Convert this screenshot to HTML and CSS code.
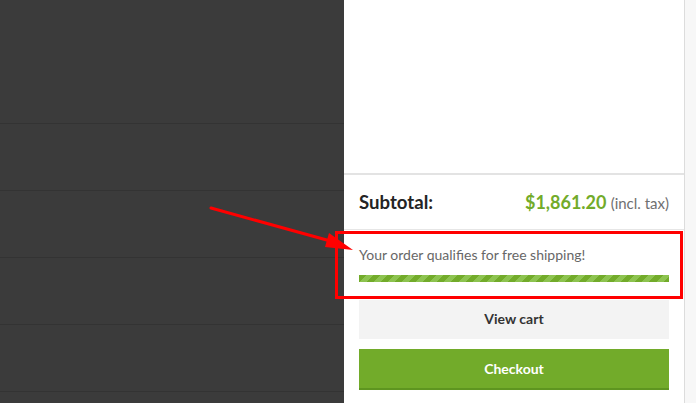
FILE: index.html
```html
<!DOCTYPE html>
<html>
<head>
<meta charset="utf-8">
<link rel="stylesheet" href="styles.css">
</head>
<body>
<div class="page">
  <div class="backdrop">
    <div class="row row-first"></div>
    <div class="row"></div>
    <div class="row"></div>
    <div class="row"></div>
    <div class="row"></div>
    <div class="row row-last"></div>
  </div>
  <aside class="cart">
    <div class="cart-items"></div>
    <div class="subtotal">
      <span class="subtotal-label">Subtotal:</span>
      <span class="subtotal-value"><span class="price">$1,861.20</span> <small class="tax">(incl. tax)</small></span>
    </div>
    <div class="shipping">
      <p class="shipping-text">Your order qualifies for free shipping!</p>
      <div class="progress"></div>
    </div>
    <div class="actions">
      <a class="btn btn-view">View cart</a>
      <a class="btn btn-checkout">Checkout</a>
    </div>
  </aside>
  <div class="scrollbar"></div>
  <div class="annot-box"></div>
  <svg class="annot-arrow" width="696" height="403" viewBox="0 0 696 403">
    <line x1="211" y1="208" x2="334" y2="242" stroke="#ff0000" stroke-width="3" stroke-linecap="round"/>
    <polygon points="353,250 329,233 325,247" fill="#ff0000"/>
  </svg>
</div>
</body>
</html>
```
FILE: styles.css
```css
* { box-sizing: border-box; }
html, body { margin: 0; padding: 0; }
body {
  font-family: Lato, "Open Sans", sans-serif;
  width: 696px;
  height: 403px;
  overflow: hidden;
}
.page {
  position: relative;
  display: flex;
  width: 696px;
  height: 403px;
  overflow: hidden;
}
.backdrop {
  flex: 0 0 344px;
  background: #3b3b3b;
  display: flex;
  flex-direction: column;
  overflow: hidden;
}
.row {
  height: 67px;
  border-bottom: 1px solid #333333;
  flex: 0 0 auto;
}
.row-first { height: 124px; }
.row-last { border-bottom: none; }
.cart {
  flex: 0 0 340px;
  background: #ffffff;
  display: flex;
  flex-direction: column;
  overflow: hidden;
}
.cart-items {
  height: 175px;
  border-bottom: 2px solid #e3e3e3;
  flex: 0 0 auto;
}
.subtotal {
  height: 55px;
  flex: 0 0 auto;
  border-bottom: 1px solid #e6e6e6;
  display: flex;
  align-items: center;
  justify-content: space-between;
  padding: 0 15px;
}
.subtotal-label {
  font-weight: 700;
  font-size: 18.6px;
  color: #242424;
}
.price {
  font-weight: 700;
  font-size: 18px;
  color: #72ab2a;
}
.tax {
  font-size: 15px;
  color: #707070;
}
.shipping {
  padding: 15px 15px 0;
}
.shipping-text {
  margin: 0;
  font-size: 14px;
  line-height: 20px;
  color: #676767;
}
.progress {
  margin-top: 10px;
  height: 7px;
  background-color: #72ab2a;
  background-image: repeating-linear-gradient(135deg, #72ab2a 0, #72ab2a 5px, #8dc350 5px, #8dc350 10px);
}
.actions {
  padding: 18px 15px 0;
  display: flex;
  flex-direction: column;
  gap: 10px;
}
.btn {
  display: flex;
  align-items: center;
  justify-content: center;
  font-weight: 700;
  font-size: 14px;
}
.btn-view {
  height: 39px;
  padding-bottom: 3px;
  background: #f3f3f3;
  color: #333333;
}
.btn-checkout {
  height: 41px;
  background: #72ab2a;
  color: #ffffff;
  border-bottom: 2px solid #5e9520;
}
.scrollbar {
  flex: 1 1 auto;
  background: #f7f7f7;
  border-left: 1px solid #dcdcdc;
}
.annot-box {
  position: absolute;
  left: 335px;
  top: 231px;
  width: 348px;
  height: 68px;
  border: 3px solid #ff0000;
}
.annot-arrow {
  position: absolute;
  left: 0;
  top: 0;
  pointer-events: none;
}
```
